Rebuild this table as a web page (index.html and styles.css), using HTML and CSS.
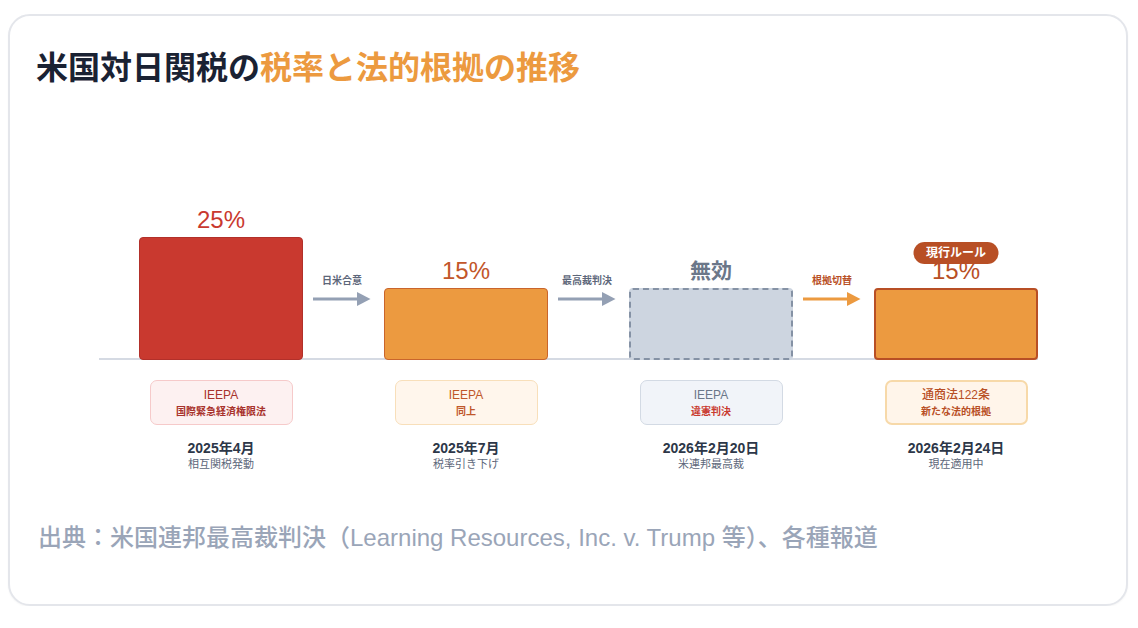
FILE: index.html
```html
<!DOCTYPE html>
<html lang="ja">
<head>
<meta charset="utf-8">
<title>米国対日関税の税率と法的根拠の推移</title>
<link rel="stylesheet" href="styles.css">
</head>
<body>
<div class="card">
  <h1 class="title"><span class="title-dark">米国対日関税の</span><span class="title-accent">税率と法的根拠の推移</span></h1>

  <div class="chart">
    <div class="plot">
      <div class="col">
        <div class="value value-red">25%</div>
        <div class="bar bar-red bar-tall"></div>
      </div>
      <div class="arrow">
        <div class="arrow-label">日米合意</div>
        <svg class="arrow-svg" width="58" height="14" viewBox="0 0 58 14"><rect x="0" y="5.5" width="45" height="3" fill="#94a0b4"/><polygon points="44,0 57.5,7 44,14" fill="#94a0b4"/></svg>
      </div>
      <div class="col">
        <div class="value value-orange">15%</div>
        <div class="bar bar-orange bar-short"></div>
      </div>
      <div class="arrow">
        <div class="arrow-label">最高裁判決</div>
        <svg class="arrow-svg" width="58" height="14" viewBox="0 0 58 14"><rect x="0" y="5.5" width="45" height="3" fill="#94a0b4"/><polygon points="44,0 57.5,7 44,14" fill="#94a0b4"/></svg>
      </div>
      <div class="col">
        <div class="value value-gray">無効</div>
        <div class="bar bar-void bar-short"></div>
      </div>
      <div class="arrow">
        <div class="arrow-label arrow-label-brown">根拠切替</div>
        <svg class="arrow-svg" width="58" height="14" viewBox="0 0 58 14"><rect x="0" y="5.5" width="45" height="3" fill="#ec9a40"/><polygon points="44,0 57.5,7 44,14" fill="#ec9a40"/></svg>
      </div>
      <div class="col">
        <div class="value value-brown value-current">15%<span class="badge">現行ルール</span></div>
        <div class="bar bar-current bar-short"></div>
      </div>
    </div>

    <div class="info-row">
      <div class="info">
        <div class="box box-red">
          <div class="box-main">IEEPA</div>
          <div class="box-sub">国際緊急経済権限法</div>
        </div>
        <div class="date">2025年4月</div>
        <div class="date-sub">相互関税発動</div>
      </div>
      <div class="gap"></div>
      <div class="info">
        <div class="box box-orange">
          <div class="box-main">IEEPA</div>
          <div class="box-sub">同上</div>
        </div>
        <div class="date">2025年7月</div>
        <div class="date-sub">税率引き下げ</div>
      </div>
      <div class="gap"></div>
      <div class="info">
        <div class="box box-gray">
          <div class="box-main">IEEPA</div>
          <div class="box-sub">違憲判決</div>
        </div>
        <div class="date">2026年2月20日</div>
        <div class="date-sub">米連邦最高裁</div>
      </div>
      <div class="gap"></div>
      <div class="info">
        <div class="box box-current">
          <div class="box-main">通商法122条</div>
          <div class="box-sub">新たな法的根拠</div>
        </div>
        <div class="date">2026年2月24日</div>
        <div class="date-sub">現在適用中</div>
      </div>
    </div>
  </div>

  <p class="source">出典：米国連邦最高裁判決（Learning Resources, Inc. v. Trump 等）、各種報道</p>
</div>
</body>
</html>
```

FILE: styles.css
```css
* { box-sizing: border-box; }

html, body {
  margin: 0;
  padding: 0;
  background: #ffffff;
}

body {
  padding: 14px 10px 0 8px;
  font-family: "Liberation Sans", "Noto Sans CJK JP", sans-serif;
}

.card {
  width: 1120px;
  height: 592px;
  border: 2px solid #e4e6eb;
  border-radius: 22px;
  background: #ffffff;
  padding: 32px 26px 0 26px;
  box-shadow: 0 1px 2px rgba(0, 0, 0, 0.04);
}

.title {
  margin: 0;
  font-size: 32px;
  line-height: 40px;
  font-weight: 700;
  letter-spacing: 0;
}

.title-dark { color: #1a2233; }
.title-accent { color: #ec9a3f; }

.chart {
  margin-top: 118px;
  margin-left: 63px;
}

.plot {
  display: flex;
  align-items: flex-end;
  width: 939px;
  padding-left: 40px;
  border-bottom: 2px solid #d5dae3;
}

.col {
  width: 164px;
  display: flex;
  flex-direction: column;
  align-items: center;
  margin-bottom: -2px;
}

.value {
  font-size: 24px;
  line-height: 28px;
  font-weight: 500;
  margin-bottom: 3px;
}

.value-red { color: #c9392f; }
.value-orange { color: #c2562a; }
.value-gray {
  color: #6b7789;
  font-size: 21px;
  font-weight: 700;
}
.value-brown { color: #b84f25; }

.value-current { position: relative; }

.badge {
  position: absolute;
  left: 50%;
  top: -15px;
  transform: translateX(-50%);
  width: 85px;
  height: 22px;
  border-radius: 11px;
  background: #b84f25;
  color: #ffffff;
  font-size: 12px;
  line-height: 22px;
  font-weight: 700;
  text-align: center;
  white-space: nowrap;
}

.bar {
  width: 164px;
  border-radius: 4px;
}

.bar-tall { height: 123px; }
.bar-short { height: 72px; }

.bar-red {
  background: #c9392f;
  border: 1px solid #b2302a;
}

.bar-orange {
  background: #ec9a40;
  border: 1px solid #c9652c;
}

.bar-void {
  background: #cdd5e0;
  border: 2px dashed #8592a5;
}

.bar-current {
  background: #ec9a40;
  border: 2px solid #b84f25;
}

.arrow {
  width: 81px;
  display: flex;
  flex-direction: column;
  align-items: center;
  margin-bottom: 52px;
  padding-right: 3px;
}

.arrow-label {
  font-size: 10px;
  line-height: 14px;
  font-weight: 700;
  color: #5d677a;
  margin-bottom: 4px;
  white-space: nowrap;
}

.arrow-label-brown { color: #b84f25; }

.arrow-svg { display: block; }

.info-row {
  display: flex;
  padding-left: 40px;
  margin-top: 20px;
}

.gap { width: 81px; }

.info {
  width: 164px;
  display: flex;
  flex-direction: column;
  align-items: center;
}

.box {
  width: 143px;
  height: 45px;
  border-radius: 7px;
  border: 1px solid;
  text-align: center;
  padding-top: 6px;
}

.box-main {
  font-size: 12px;
  line-height: 16px;
  font-weight: 500;
}

.box-sub {
  font-size: 10px;
  line-height: 14px;
  font-weight: 700;
  margin-top: 2px;
}

.box-red {
  background: #fdf1f1;
  border-color: #f6caca;
  color: #a8322c;
}

.box-orange {
  background: #fff6ec;
  border-color: #f8dfba;
  color: #c0572a;
}

.box-gray {
  background: #f1f4f9;
  border-color: #d3dae4;
  color: #6b7789;
}
.box-gray .box-sub { color: #c9392f; }

.box-current {
  background: #fff5ea;
  border: 2px solid #f7d9a9;
  color: #b84f25;
  padding-top: 5px;
}

.date {
  margin-top: 14px;
  font-size: 14px;
  line-height: 18px;
  font-weight: 700;
  color: #2d3748;
  white-space: nowrap;
}

.date-sub {
  font-size: 11px;
  line-height: 15px;
  color: #5d677a;
  white-space: nowrap;
}

.source {
  margin: 50px 0 0 2px;
  font-size: 24px;
  line-height: 32px;
  color: #9aa5b8;
  font-weight: 500;
  white-space: nowrap;
}
```
